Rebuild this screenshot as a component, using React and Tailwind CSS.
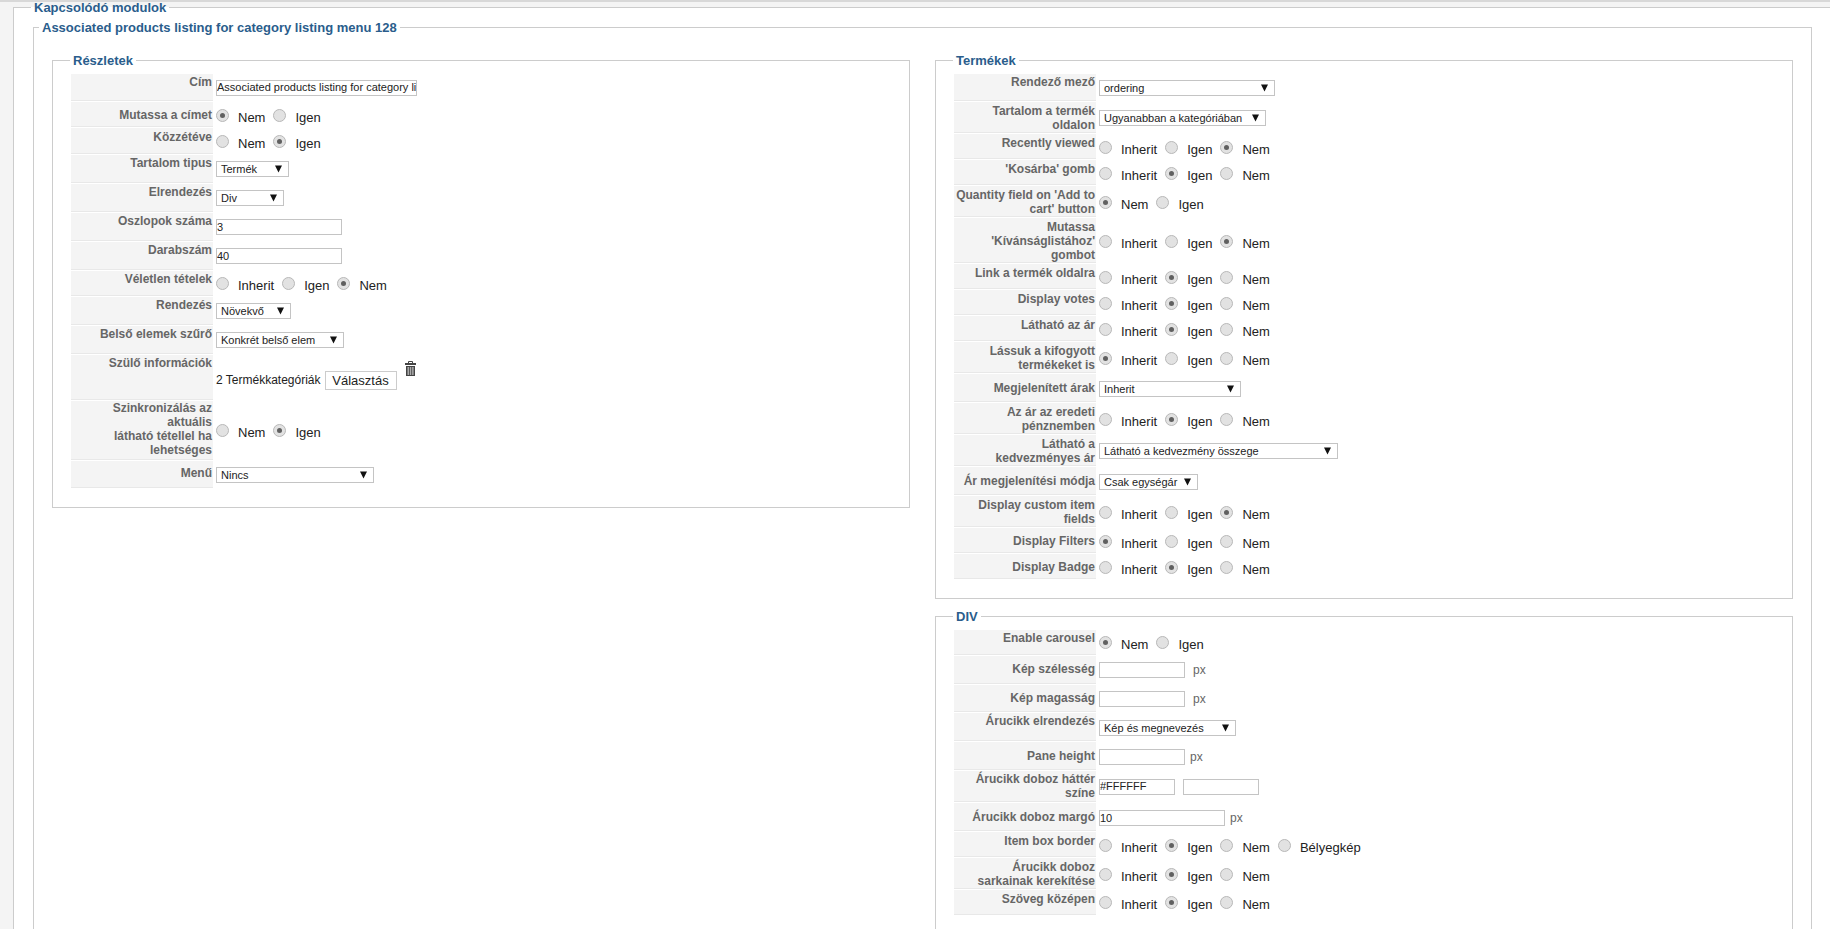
import React from "react";

const Arrow = () => (
  <svg width="7" height="8" viewBox="0 0 7 8" className="shrink-0">
    <polygon points="0,0.5 7,0.5 3.5,7.5" fill="#111" />
  </svg>
);

const Radio = ({ on }) => (
  <span className="w-[13px] h-[13px] shrink-0 rounded-full border border-[#b8b8b8] bg-[#e2e2e2] flex items-center justify-center">
    {on && <span className="w-[5px] h-[5px] rounded-full bg-[#606060]" />}
  </span>
);

const Radios = ({ items, on, flat }) => (
  <div className={`flex items-center ${flat ? "" : "pt-[2px]"}`}>
    {items.map((t, i) => (
      <React.Fragment key={t}>
        <Radio on={i === on} />
        <span className="ml-[9px] mr-[8px] mt-[4px] text-[13px] leading-[15px] text-[#222]">{t}</span>
      </React.Fragment>
    ))}
  </div>
);

const NI = ["Nem", "Igen"];
const INI = ["Inherit", "Igen", "Nem"];

const Sel = ({ w, children }) => (
  <div className={`${w} h-[16px] pl-[4px] pr-[6px] border border-[#c4c4c4] bg-white flex items-center justify-between text-[11px] leading-[14px] text-[#222]`}>
    <span>{children}</span>
    <Arrow />
  </div>
);

const Inp = ({ w, value = "" }) => (
  <input
    readOnly
    value={value}
    className={`${w} h-[16px] px-0 border border-[#c4c4c4] bg-white text-[11px] text-[#222] outline-none`}
  />
);

const Px = ({ ml }) => <span className={`${ml} text-xs text-[#666]`}>px</span>;

const Row = ({ h, pt = "pt-px", label, children, start, low }) => (
  <div className="flex mb-px">
    <div className={`${h} ${pt} w-[142px] shrink-0 pr-px bg-[#f4f4f4] border-b border-[#e8e8e8] text-right text-xs leading-[14px] font-bold text-[#666] whitespace-pre-line`}>
      {label}
    </div>
    <div className={`${h} ${low ? "pt-[2px]" : ""} pl-[3px] flex ${start ? "items-start" : "items-center"}`}>{children}</div>
  </div>
);

const Box = ({ title, pb, mt = "", children }) => (
  <fieldset className={`${mt} ${pb} pl-[18px] pt-[6px] border border-[#cccccc] min-w-0`}>
    <legend className="-ml-px px-[3px] text-[13px] leading-[15px] font-bold text-[#2a5d8c]">{title}</legend>
    {children}
  </fieldset>
);

const Trash = () => (
  <svg width="11" height="15" viewBox="0 0 11 15" className="ml-[8px] mt-[6px]">
    <path d="M3.5 2V.5h4V2" fill="none" stroke="#444" strokeWidth="1" />
    <rect x="0" y="2" width="11" height="2" fill="#444" />
    <rect x="1" y="5" width="9" height="10" fill="#444" />
    <rect x="2.5" y="6" width="1.5" height="8" fill="#aaa" />
    <rect x="4.8" y="6" width="1.5" height="8" fill="#aaa" />
    <rect x="7.1" y="6" width="1.5" height="8" fill="#aaa" />
  </svg>
);

export default function App() {
  return (
    <div className="h-[929px] w-[1830px] overflow-hidden bg-[#f4f4f4] border-t-2 border-[#d8d8d8] font-['Liberation_Sans',sans-serif]">
      <fieldset className="ml-[13px] w-[1830px] pl-[19px] border border-[#cccccc] bg-white min-w-0">
        <legend className="-ml-[2px] px-[3px] text-[13px] leading-[11px] font-bold text-[#2a5d8c]">Kapcsolódó modulok</legend>
        <fieldset className="mt-[7px] w-[1779px] px-[18px] pt-[18px] border border-[#cccccc] min-w-0">
          <legend className="-ml-[13px] px-[3px] text-[13px] leading-[15px] font-bold text-[#2a5d8c]">
            Associated products listing for category listing menu 128
          </legend>
          <div className="grid grid-cols-2 gap-[25px] items-start">
            <Box title="Részletek" pb="pb-[18px]">
              <Row h="h-[27px]" label="Cím"><Inp w="w-[201px]" value="Associated products listing for category listing menu 128" /></Row>
              <Row h="h-[25px]" pt="pt-[6px]" label="Mutassa a címet"><Radios items={NI} on={0} /></Row>
              <Row h="h-[26px]" pt="pt-[2px]" label="Közzétéve"><Radios items={NI} on={1} flat /></Row>
              <Row h="h-[28px]" label="Tartalom tipus"><Sel w="w-[73px]">Termék</Sel></Row>
              <Row h="h-[28px]" label="Elrendezés"><Sel w="w-[68px]">Div</Sel></Row>
              <Row h="h-[28px]" label="Oszlopok száma"><Inp w="w-[126px]" value="3" /></Row>
              <Row h="h-[28px]" label="Darabszám"><Inp w="w-[126px]" value="40" /></Row>
              <Row h="h-[25px]" label="Véletlen tételek"><Radios items={INI} on={2} flat /></Row>
              <Row h="h-[28px]" label="Rendezés"><Sel w="w-[75px]">Növekvő</Sel></Row>
              <Row h="h-[28px]" label="Belső elemek szűrő"><Sel w="w-[128px]">Konkrét belső elem</Sel></Row>
              <Row h="h-[45px]" label="Szülő információk" start>
                <span className="mt-[18px] text-xs leading-[14px] text-[#222]">2 Termékkategóriák</span>
                <button className="ml-[4px] mt-[16px] w-[72px] h-[19px] border border-[#cccccc] bg-white text-[13px] leading-[15px] text-[#222]">Választás</button>
                <Trash />
              </Row>
              <Row h="h-[59px]" pt="pt-0" label={"Szinkronizálás az\naktuális\nlátható tétellel ha\nlehetséges"}><Radios items={NI} on={1} flat /></Row>
              <Row h="h-[27px]" pt="pt-[5px]" label="Menű"><Sel w="w-[158px]">Nincs</Sel></Row>
            </Box>
            <div>
              <Box title="Termékek" pb="pb-[18px]">
                <Row h="h-[27px]" label="Rendező mező"><Sel w="w-[176px]">ordering</Sel></Row>
                <Row h="h-[31px]" pt="pt-[2px]" label="Tartalom a termék oldalon"><Sel w="w-[167px]">Ugyanabban a kategóriában</Sel></Row>
                <Row h="h-[25px]" pt="pt-[2px]" label="Recently viewed"><Radios items={INI} on={2} /></Row>
                <Row h="h-[25px]" pt="pt-[2px]" label="'Kosárba' gomb"><Radios items={INI} on={1} /></Row>
                <Row h="h-[31px]" pt="pt-[2px]" label="Quantity field on 'Add to cart' button"><Radios items={NI} on={0} /></Row>
                <Row h="h-[45px]" pt="pt-[2px]" label={"Mutassa\n'Kívánságlistához'\ngombot"}><Radios items={INI} on={2} /></Row>
                <Row h="h-[25px]" pt="pt-[2px]" label="Link a termék oldalra"><Radios items={INI} on={1} /></Row>
                <Row h="h-[25px]" pt="pt-[2px]" label="Display votes"><Radios items={INI} on={1} /></Row>
                <Row h="h-[25px]" pt="pt-[2px]" label="Látható az ár"><Radios items={INI} on={1} /></Row>
                <Row h="h-[31px]" pt="pt-[2px]" label="Lássuk a kifogyott termékeket is"><Radios items={INI} on={0} /></Row>
                <Row h="h-[28px]" pt="pt-[7px]" low label="Megjelenített árak"><Sel w="w-[142px]">Inherit</Sel></Row>
                <Row h="h-[31px]" pt="pt-[2px]" label="Az ár az eredeti pénznemben"><Radios items={INI} on={1} /></Row>
                <Row h="h-[31px]" pt="pt-[2px]" label="Látható a kedvezményes ár"><Sel w="w-[239px]">Látható a kedvezmény összege</Sel></Row>
                <Row h="h-[28px]" pt="pt-[7px]" low label="Ár megjelenítési módja"><Sel w="w-[99px]">Csak egységár</Sel></Row>
                <Row h="h-[31px]" pt="pt-[2px]" label="Display custom item fields"><Radios items={INI} on={2} /></Row>
                <Row h="h-[25px]" pt="pt-[6px]" label="Display Filters"><Radios items={INI} on={0} /></Row>
                <Row h="h-[25px]" pt="pt-[6px]" label="Display Badge"><Radios items={INI} on={1} /></Row>
              </Box>
              <Box title="DIV" pb="pb-[18px]" mt="mt-[10px]">
                <Row h="h-[25px]" label="Enable carousel"><Radios items={NI} on={0} flat /></Row>
                <Row h="h-[28px]" pt="pt-[6px]" label="Kép szélesség"><Inp w="w-[86px]" /><Px ml="ml-[8px]" /></Row>
                <Row h="h-[27px]" pt="pt-[6px]" label="Kép magasság"><Inp w="w-[86px]" /><Px ml="ml-[8px]" /></Row>
                <Row h="h-[28px]" low label="Árucikk elrendezés"><Sel w="w-[137px]">Kép és megnevezés</Sel></Row>
                <Row h="h-[28px]" pt="pt-[7px]" low label="Pane height"><Inp w="w-[86px]" /><Px ml="ml-[5px]" /></Row>
                <Row h="h-[31px]" label="Árucikk doboz háttér színe"><Inp w="w-[76px]" value="#FFFFFF" /><span className="ml-[8px] flex"><Inp w="w-[76px]" /></span></Row>
                <Row h="h-[28px]" pt="pt-[7px]" low label="Árucikk doboz margó"><Inp w="w-[126px]" value="10" /><Px ml="ml-[5px]" /></Row>
                <Row h="h-[25px]" pt="pt-[2px]" label="Item box border"><Radios items={["Inherit", "Igen", "Nem", "Bélyegkép"]} on={1} /></Row>
                <Row h="h-[31px]" pt="pt-[2px]" label="Árucikk doboz sarkainak kerekítése"><Radios items={INI} on={1} /></Row>
                <Row h="h-[25px]" pt="pt-[2px]" label="Szöveg középen"><Radios items={INI} on={1} flat /></Row>
              </Box>
            </div>
          </div>
        </fieldset>
      </fieldset>
    </div>
  );
}
